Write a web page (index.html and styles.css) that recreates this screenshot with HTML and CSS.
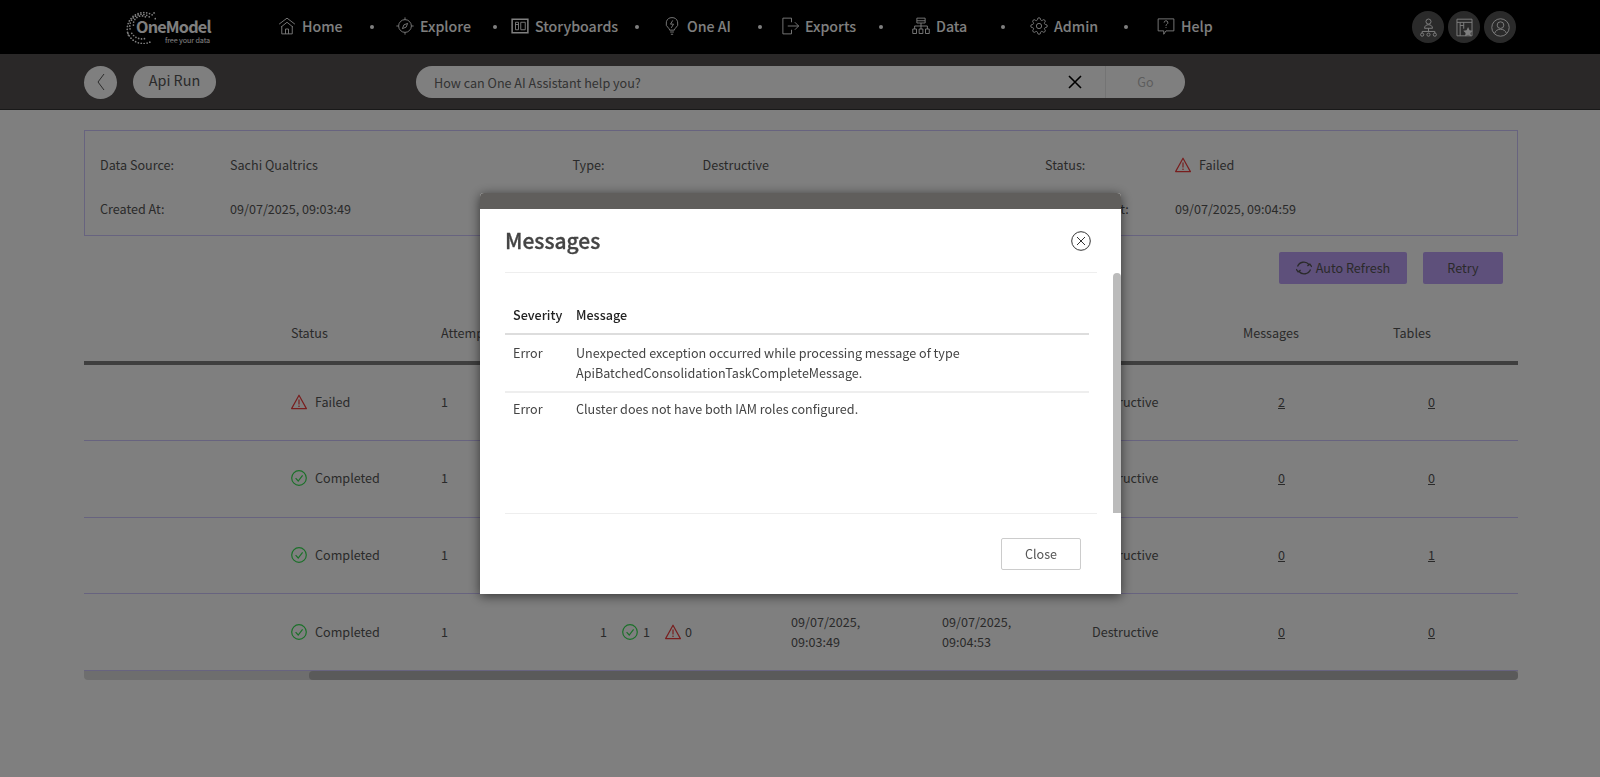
FILE: index.html
```html
<!DOCTYPE html>
<html lang="en">
<head>
<meta charset="utf-8">
<title>Api Run</title>
<link rel="stylesheet" href="styles.css">
</head>
<body>
<svg class="defs" aria-hidden="true">
  <symbol id="i-check" viewBox="0 0 16 16"><circle cx="8" cy="8" r="7.3" fill="none" stroke="currentColor" stroke-width="1.2"/><path d="M4.6 8.200 7.200 11l4.400-5.600" fill="none" stroke="currentColor" stroke-width="1.2"/></symbol>
  <symbol id="i-warn" viewBox="0 0 16 16"><path d="M8 1.200 15.400 14.600H.6z" fill="none" stroke="currentColor" stroke-width="1.2" stroke-linejoin="round"/><path d="M8 5.600v5" stroke="currentColor" stroke-width="1.2"/><circle cx="8" cy="12.300" r=".8" fill="currentColor"/></symbol>
</svg>

<header class="topbar">
  <a class="logo">
    <svg class="logo-dots" viewBox="0 0 32 37" aria-hidden="true"><g fill="none" stroke="currentColor" stroke-width="1.800" stroke-linecap="round" stroke-dasharray="0 3"><path d="M28 7A17 17 0 0 0 4 29"/><path d="M25 9A12.500 12.500 0 0 0 6 24"/><path d="M21 9A8.500 8.500 0 0 0 9 19"/><path d="M3 26A17 17 0 0 0 26 35"/><path d="M7 26A12.500 12.500 0 0 0 22 31"/><path d="M30 5A3 3 0 0 1 31 11"/></g></svg>
    <span class="logo-name">OneModel</span>
    <span class="logo-tag">free your data</span>
  </a>
  <nav class="nav">
    <a class="nav-item"><svg class="nav-icon" viewBox="0 0 24 24"><path d="M1.500 9.500 12 1.500l10.500 8M4 13.500 12 7l8 6.500M5 12.500V22.500h14v-10M10 22.500v-6.500h4v6.500"/></svg>Home</a><span class="nav-dot"></span>
    <a class="nav-item"><svg class="nav-icon" viewBox="0 0 24 24"><circle cx="12" cy="12" r="8.500"/><path d="M12 .5v3M12 20.500v3M.5 12h3M20.500 12h3M15.500 8.500l-2 5-5 2 2-5z"/></svg>Explore</a><span class="nav-dot"></span>
    <a class="nav-item"><svg class="nav-icon" viewBox="0 0 24 24"><path class="thick" d="M1.500 3h21v18h-21z"/><path d="M6 7h4v10H6zM6 10h4M13 7h6v10h-6z"/></svg>Storyboards</a><span class="nav-dot"></span>
    <a class="nav-item"><svg class="nav-icon" viewBox="0 0 24 24"><path d="M12 .8a7.800 7.800 0 0 0-4.500 14.200c.8.600 1.300 1.300 1.300 2.500h6.400c0-1.200.5-1.900 1.300-2.500A7.800 7.800 0 0 0 12 .8zM9.500 20h5M10.500 23h3M13 4.500l-3 5h4l-3 5"/></svg>One AI</a><span class="nav-dot"></span>
    <a class="nav-item"><svg class="nav-icon" viewBox="0 0 24 24"><path d="M14 7V1.500H2.500v21H14V17M9 12h14.500M18.500 7l5 5-5 5"/></svg>Exports</a><span class="nav-dot"></span>
    <a class="nav-item"><svg class="nav-icon" viewBox="0 0 24 24"><path d="M6.500 1.500h11v6.500h-11zM6.500 5h11M12 8v8M3.500 16v-4h17v4M1 16h5v6H1zM9.500 16h5v6h-5zM18 16h5v6h-5z"/></svg>Data</a><span class="nav-dot"></span>
    <a class="nav-item"><svg class="nav-icon" viewBox="0 0 24 24"><circle cx="12" cy="12" r="3.500"/><path d="M19.400 15a1.650 1.650 0 0 0 .33 1.820l.06.06a2 2 0 0 1 0 2.830 2 2 0 0 1-2.830 0l-.06-.06a1.650 1.650 0 0 0-1.820-.33 1.650 1.650 0 0 0-1 1.510V21a2 2 0 0 1-2 2 2 2 0 0 1-2-2v-.09A1.650 1.650 0 0 0 9 19.400a1.650 1.650 0 0 0-1.820.33l-.06.06a2 2 0 0 1-2.830 0 2 2 0 0 1 0-2.830l.06-.06a1.650 1.650 0 0 0 .33-1.820 1.650 1.650 0 0 0-1.510-1H3a2 2 0 0 1-2-2 2 2 0 0 1 2-2h.09A1.650 1.650 0 0 0 4.600 9a1.650 1.650 0 0 0-.33-1.820l-.06-.06a2 2 0 0 1 0-2.830 2 2 0 0 1 2.830 0l.06.06a1.650 1.650 0 0 0 1.820.33H9a1.650 1.650 0 0 0 1-1.510V3a2 2 0 0 1 2-2 2 2 0 0 1 2 2v.09a1.650 1.650 0 0 0 1 1.510 1.650 1.650 0 0 0 1.820-.33l.06-.06a2 2 0 0 1 2.830 0 2 2 0 0 1 0 2.830l-.06.06a1.650 1.650 0 0 0-.33 1.820V9a1.650 1.650 0 0 0 1.510 1H21a2 2 0 0 1 2 2 2 2 0 0 1-2 2h-.09a1.650 1.650 0 0 0-1.510 1z"/></svg>Admin</a><span class="nav-dot"></span>
    <a class="nav-item"><svg class="nav-icon" viewBox="0 0 24 24"><path d="M1.500 2.500h21v16H12l-3 4.500v-4.500H1.500z"/><path d="M9.500 7.500a2.500 2.500 0 1 1 3.700 2.200c-.9.500-1.200 1.100-1.200 2.100M12 13.500v1.200"/></svg>Help</a>
  </nav>
  <div class="top-actions">
    <button class="round-btn"><svg viewBox="0 0 24 24"><circle cx="12" cy="4.500" r="3.200"/><path d="M7 13c0-3 2.200-4.500 5-4.500s5 1.500 5 4.500zM12 13v4M4 19v-2h16v2"/><circle cx="4" cy="21" r="2"/><circle cx="12" cy="21" r="2"/><circle cx="20" cy="21" r="2"/></svg></button>
    <button class="round-btn"><svg viewBox="0 0 24 24"><path d="M2.500 1.500h19v21h-19zM2.500 5.500h19M6.500 5.500v17M11 5.500v8M6.500 9.500H11"/><path class="star" d="m16.500 11.500 1.900 3.900 4.200.6-3 3 .7 4.200-3.800-2-3.800 2 .7-4.200-3-3 4.200-.6z"/></svg></button>
    <button class="round-btn"><svg viewBox="0 0 24 24"><circle cx="12" cy="12" r="11"/><circle cx="12" cy="9" r="4.200"/><path d="M4.500 19.500c1-3.500 4-5.300 7.500-5.300s6.500 1.800 7.500 5.300"/></svg></button>
  </div>
</header>

<div class="subbar">
  <button class="back-btn"><svg viewBox="0 0 12 20"><path d="M9 2 3 10l6 8"/></svg></button>
  <div class="title-pill">Api Run</div>
  <div class="search">
    <span class="search-text">How can One AI Assistant help you?</span>
    <svg class="search-clear" viewBox="0 0 14 14"><path d="M1 1l12 12M13 1 1 13"/></svg>
    <span class="search-go">Go</span>
  </div>
</div>

<main class="page">
  <section class="summary">
    <div class="field"><span class="field-label">Data Source:</span><span>Sachi Qualtrics</span></div>
    <div class="field"><span class="field-label">Type:</span><span>Destructive</span></div>
    <div class="field"><span class="field-label">Status:</span><span class="status"><svg class="status-icon warn"><use href="#i-warn"/></svg>Failed</span></div>
    <div class="field"><span class="field-label">Created At:</span><span>09/07/2025, 09:03:49</span></div>
    <div class="field"><span class="field-label">Started At:</span><span></span></div>
    <div class="field"><span class="field-label">Completed At:</span><span>09/07/2025, 09:04:59</span></div>
  </section>

  <div class="actions">
    <button class="btn-purple btn-refresh"><svg class="refresh-icon" viewBox="0 0 16 16"><path d="M1.500 6.500A6.800 6.800 0 0 1 13 4.500M14.500 9.500A6.800 6.800 0 0 1 3 11.500M.2 9.200l1.900 2.600 2.500-1.700M15.800 6.800l-1.900-2.600-2.500 1.700"/></svg>Auto Refresh</button>
    <button class="btn-purple btn-retry">Retry</button>
  </div>

  <section class="runs">
    <div class="run-row run-head">
      <span>Status</span><span>Attempts</span><span>Tasks</span><span>Started At</span><span>Completed At</span><span>Type</span><span>Messages</span><span>Tables</span>
    </div>
    <div class="run-row">
      <span class="status"><svg class="status-icon warn"><use href="#i-warn"/></svg>Failed</span><span>1</span><span></span><span></span><span></span><span>Destructive</span><a class="count">2</a><a class="count">0</a>
    </div>
    <div class="run-row">
      <span class="status"><svg class="status-icon ok"><use href="#i-check"/></svg>Completed</span><span>1</span><span></span><span></span><span></span><span>Destructive</span><a class="count">0</a><a class="count">0</a>
    </div>
    <div class="run-row">
      <span class="status"><svg class="status-icon ok"><use href="#i-check"/></svg>Completed</span><span>1</span><span></span><span></span><span></span><span>Destructive</span><a class="count">0</a><a class="count">1</a>
    </div>
    <div class="run-row">
      <span class="status"><svg class="status-icon ok"><use href="#i-check"/></svg>Completed</span><span>1</span>
      <span class="tasks"><span class="tasks-total">1</span><svg class="status-icon ok"><use href="#i-check"/></svg><span class="tasks-ok">1</span><svg class="status-icon warn"><use href="#i-warn"/></svg><span>0</span></span>
      <span class="date">09/07/2025, 09:03:49</span><span class="date">09/07/2025, 09:04:53</span><span>Destructive</span><a class="count">0</a><a class="count">0</a>
    </div>
    <div class="hscroll"><div class="hscroll-thumb"></div></div>
  </section>
</main>

<div class="overlay">
  <div class="modal">
    <div class="modal-band"></div>
    <div class="modal-head">
      <h2 class="modal-title">Messages</h2>
      <svg class="modal-close" viewBox="0 0 20 20"><circle cx="10" cy="10" r="9.300"/><path d="M6 6l8 8M14 6l-8 8"/></svg>
    </div>
    <div class="modal-body">
      <div class="modal-content">
        <table class="msg-table">
          <thead><tr><th class="col-sev">Severity</th><th>Message</th></tr></thead>
          <tbody>
            <tr><td>Error</td><td>Unexpected exception occurred while processing message of type ApiBatchedConsolidationTaskCompleteMessage.</td></tr>
            <tr><td>Error</td><td>Cluster does not have both IAM roles configured.</td></tr>
          </tbody>
        </table>
      </div>
      <div class="modal-scroll"></div>
    </div>
    <div class="modal-foot"><button class="btn-close">Close</button></div>
  </div>
</div>
</body>
</html>
```

FILE: styles.css
```css
* { box-sizing: border-box; }
html, body { margin: 0; height: 100%; overflow: hidden; }
body {
  font-family: "Noto Sans CJK JP", "Noto Sans", sans-serif;
  font-size: 12.6px;
  line-height: 20px;
  color: #555;
  background: #fff;
}
.defs { display: none; }
button { font: inherit; border: 0; padding: 0; }

/* top bar */
.topbar { height: 54px; background: #000; display: flex; align-items: center; padding: 0 84px 0 125px; color: #fff; }
.logo { position: relative; display: block; width: 153px; height: 54px; flex: none; }
.logo-dots { position: absolute; left: 0; top: 8px; width: 31px; height: 36px; color: #fff; }
.logo-name { position: absolute; left: 11px; top: 16px; font-size: 16.2px; line-height: 20px; font-weight: 700; letter-spacing: -.8px; }
.logo-tag { position: absolute; left: 40px; top: 36px; font-size: 7.2px; line-height: 9px; white-space: nowrap; letter-spacing: -.1px; }
.nav {
  display: grid;
  grid-template-columns: 92px 26px 97px 18px 124px 28px 95px 23px 98px 33px 89px 29px 94px 33px auto;
  align-items: center;
  font-size: 14.2px;
  font-weight: 500;
}
.nav-item { display: flex; align-items: center; gap: 6px; white-space: nowrap; line-height: 20px; margin-top: -2px; }
.nav-icon { width: 18px; height: 18px; fill: none; stroke: currentColor; stroke-width: 1.2; flex: none; }
.nav-icon .thick { stroke-width: 2; }
.nav-dot { width: 4px; height: 4px; border-radius: 50%; background: #fff; }
.top-actions { display: flex; gap: 4px; margin-left: auto; }
.round-btn { width: 32px; height: 32px; border-radius: 50%; background: #555; display: flex; align-items: center; justify-content: center; color: #fff; }
.round-btn svg { width: 19px; height: 19px; fill: none; stroke: currentColor; stroke-width: 1.2; }
.round-btn .star { fill: #fff; stroke: none; }

/* sub bar */
.subbar { height: 56px; background: #555151; border-bottom: 1px solid #333; display: flex; align-items: center; padding: 1px 0 0 84px; }
.back-btn { width: 33px; height: 33px; border-radius: 50%; background: #fff; display: flex; align-items: center; justify-content: center; }
.back-btn svg { width: 12px; height: 20px; fill: none; stroke: #555; stroke-width: 1; }
.title-pill { width: 83px; height: 32px; margin-left: 16px; border-radius: 16px; background: #fff; color: #555; font-size: 14.4px; line-height: 28px; text-align: center; }
.search { width: 769px; height: 32px; margin-left: 200px; border-radius: 16px; background: #fff; display: flex; align-items: center; padding-left: 18px; color: #666; }
.search-text { flex: 1; padding-top: 1px; }
.search-clear { width: 14px; height: 14px; margin-right: 23px; fill: none; stroke: #000; stroke-width: 1.6; }
.search-go { width: 80px; height: 32px; line-height: 32px; text-align: center; border-left: 1px solid #e8e8e8; color: #bbb; }

/* page */
.page { padding: 20px 82px 0 84px; }
.summary { height: 106px; border: 1px solid #cfc6ff; padding: 12px 0 12px 15px; display: grid; grid-template-columns: repeat(3, 472.5px); grid-auto-rows: 44px; }
.field { display: flex; align-items: center; }
.field-label { width: 130px; flex: none; }
.status { display: flex; align-items: center; gap: 8px; }
.status-icon { width: 16px; height: 16px; flex: none; }
.warn { color: #f03c3c; }
.ok { color: #36e052; }
.actions { display: flex; justify-content: flex-end; gap: 16px; margin: 16px 15px 0 0; }
.btn-purple { height: 32px; background: #bda0f7; border-radius: 2px; color: #555; display: flex; align-items: center; justify-content: center; }
.btn-refresh { width: 128px; gap: 4px; }
.btn-retry { width: 80px; }
.refresh-icon { width: 16px; height: 16px; fill: none; stroke: #555; stroke-width: 1.3; }

.run-row {
  display: grid;
  grid-template-columns: 150px 150px 200px 151px 150px 151px 150px 125px;
  align-items: center;
  height: 76.67px;
  padding: 0 0 1px 207px;
  border-bottom: 1px solid #cfc6ff;
}
.run-head { height: 80.5px; border-bottom: 4px solid #7e7e7e; padding: 22px 0 0 207px; }
.count { text-decoration: underline; padding-left: 35px; }
.tasks { display: flex; align-items: center; padding-left: 9px; }
.tasks-total { width: 22px; }
.tasks-ok { margin: 0 15px 0 5px; }
.tasks .warn { margin-right: 4px; }
.date { width: 110px; }
.hscroll { height: 9px; background: #dcdcdc; border-radius: 0 0 4px 4px; padding-left: 225px; }
.hscroll-thumb { height: 100%; background: #b4b4b4; border-radius: 4px; }

/* modal */
.overlay { position: fixed; inset: 0; background: rgba(0, 0, 0, .5); padding: 193px 0 0 480px; }
.modal { width: 641px; height: 401px; background: #fff; border-radius: 4px 4px 0 0; box-shadow: 0 2px 12px rgba(0, 0, 0, .6); display: flex; flex-direction: column; color: #444; }
.modal-band { height: 16px; background: #605e5c; border-radius: 4px 4px 0 0; flex: none; }
.modal-head { height: 64px; margin: 0 24px 0 25px; border-bottom: 1px solid #eee; display: flex; align-items: center; justify-content: space-between; padding: 0 6px 2px 0; flex: none; }
.modal-title { margin: 0; font-size: 21px; line-height: 30px; font-weight: 500; color: #444; -webkit-text-stroke: .3px #444; }
.modal-close { width: 20px; height: 20px; margin-top: 2px; fill: none; stroke: #333; stroke-width: 1; }
.modal-body { height: 240px; display: flex; flex: none; }
.modal-content { flex: 1; padding: 24px 24px 0 25px; }
.modal-scroll { width: 8px; background: #bbb; border-radius: 4px 4px 0 0; }
.msg-table { width: 584px; table-layout: fixed; border-collapse: separate; border-spacing: 0; }
.msg-table th { padding: 8px; text-align: left; font-weight: 500; color: #222; border-bottom: 2px solid #ddd; }
.msg-table td { padding: 8px; vertical-align: top; border-bottom: 2px solid #eee; }
.msg-table tr:last-child td { border-bottom: 0; padding-top: 6px; }
.col-sev { width: 63px; }
.modal-foot { flex: 1; margin: 0 24px 0 25px; border-top: 1px solid #eee; display: flex; justify-content: flex-end; padding: 24px 16px 0 0; }
.btn-close { width: 80px; height: 32px; background: #fff; border: 1px solid #ccc; border-radius: 2px; color: #555; }
```
